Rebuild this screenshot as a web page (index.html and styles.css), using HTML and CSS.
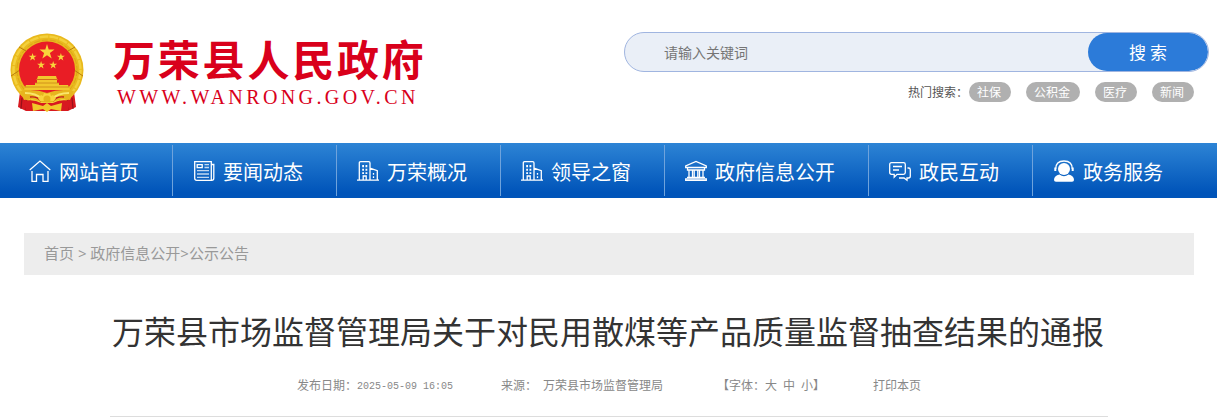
FILE: index.html
```html
<!DOCTYPE html>
<html lang="zh-CN">
<head>
    <meta charset="UTF-8">
    <title>万荣县市场监督管理局关于对民用散煤等产品质量监督抽查结果的通报</title>
    <link rel="stylesheet" href="styles.css">
</head>
<body>
    <header class="header">
        <a class="logo" href="#">
            <svg class="emblem" viewBox="0 0 74 79">
                <path d="M10 59L8 74L16 78H58L66 74L64 59Z" fill="#d81920"/>
                <path d="M12 65L11 76M17 66L16 77M57 66L58 77M62 65L63 76" stroke="#98101a" stroke-width="1.2"/>
                <circle cx="37" cy="37" r="36.5" fill="#e9b91d"/>
                <circle cx="37" cy="37" r="33.5" fill="none" stroke="#f3d03c" stroke-width="2.5" stroke-dasharray="9 1"/>
                <circle cx="37" cy="37" r="30" fill="none" stroke="#dba51a" stroke-width="1" stroke-dasharray="6 2"/>
                <path d="M1 43L10 37M73 43L64 37M9 14L16 18M65 14L58 18" stroke="#b97b0c" stroke-width="1"/>
                <circle cx="37" cy="36.5" r="28" fill="#e91d25"/>
                <g fill="#f8d53b">
                    <path id="star" d="M37 10L38.9 16.2H45.4L40.2 20L42.2 26.2L37 22.4L31.8 26.2L33.8 20L28.6 16.2H35.1Z" transform="translate(3.7 2) scale(.9)"/>
                    <path d="M37 10L38.9 16.2H45.4L40.2 20L42.2 26.2L37 22.4L31.8 26.2L33.8 20L28.6 16.2H35.1Z" transform="translate(5.2 15.2) scale(.47)"/>
                    <path d="M37 10L38.9 16.2H45.4L40.2 20L42.2 26.2L37 22.4L31.8 26.2L33.8 20L28.6 16.2H35.1Z" transform="translate(33.5 15.2) scale(.47)"/>
                    <path d="M37 10L38.9 16.2H45.4L40.2 20L42.2 26.2L37 22.4L31.8 26.2L33.8 20L28.6 16.2H35.1Z" transform="translate(13.7 23.2) scale(.47)"/>
                    <path d="M37 10L38.9 16.2H45.4L40.2 20L42.2 26.2L37 22.4L31.8 26.2L33.8 20L28.6 16.2H35.1Z" transform="translate(25.8 23.2) scale(.47)"/>
                </g>
                <path d="M28 43H46L47 46H27ZM27 47H47V50H27ZM25 50H49V54H25ZM16 52H58L60 57H14Z" fill="#f2c72d"/>
                <path d="M26 46.5H48M25 50H49M15 54H59" stroke="#c98516" stroke-width=".8"/>
                <path d="M10 58Q24 55 37 60Q50 55 64 58L60 67Q49 64 43 69H31Q25 64 14 67Z" fill="#e7b51e"/>
                <path d="M15 60Q26 60 32 66M59 60Q48 60 42 66" fill="none" stroke="#fae66b" stroke-width="2"/>
                <path d="M20 64Q27 63 31 68M54 64Q47 63 43 68" fill="none" stroke="#c41d1d" stroke-width="1.4"/>
                <path d="M28 65L31 62L33 63L34 60L37 61L40 60L41 63L43 62L46 65L44 68H30Z" fill="#f8d43c"/>
                <circle cx="37" cy="66" r="3.5" fill="#e6b21a"/>
                <path d="M14 68Q24 66 31 70H43Q50 66 60 68L58 78H16Z" fill="#d81920"/>
                <path d="M22 70L33 73L37 70L41 73L52 70L51 78L41 76L37 79L33 76L23 78Z" fill="#f1c829"/>
            </svg>
            <span class="logo-text">
                <strong class="logo-name">万荣县人民政府</strong>
                <span class="logo-url">WWW.WANRONG.GOV.CN</span>
            </span>
        </a>
        <div class="search">
            <form class="search-form">
                <input class="search-input" type="text" placeholder="请输入关键词">
                <button class="search-btn" type="button">搜 索</button>
            </form>
            <div class="hot">
                <span class="hot-label">热门搜索：</span>
                <a class="hot-tag" href="#">社保</a>
                <a class="hot-tag" href="#">公积金</a>
                <a class="hot-tag" href="#">医疗</a>
                <a class="hot-tag" href="#">新闻</a>
            </div>
        </div>
    </header>

    <nav class="nav">
        <a class="nav-item" href="#">
            <svg class="icon" viewBox="0 0 22 22"><path d="M.7 10L11 1L21.3 10M3 11V21.3H7.5V14.5H14V21.3H19V11"/></svg>
            网站首页
        </a>
        <a class="nav-item" href="#">
            <svg class="icon" viewBox="0 0 22 22"><path d="M1.7 1.7H18.3V20.3H3.7Q1.7 20.3 1.7 18.3ZM18.3 4.5H20.8V18.3Q20.8 20.3 18.8 20.3H17M4.2 4.6H9.2V7.6H4.2Z"/><path d="M11.5 4.7H16M11.5 7.5H16M4 10.7H16M4 14H16M4 17.3H16" opacity=".75"/></svg>
            要闻动态
        </a>
        <a class="nav-item" href="#">
            <svg class="icon" viewBox="0 0 22 22"><path d="M0 20.2H22M2.3 20V3Q2.3 1.7 3.6 1.7H11.7Q13 1.7 13 3V20M13 8.2L20.3 10.7V20M6.2 20V16H9.2V20M16.5 13V14.7M16.5 16.3V18"/><path d="M6.1 5V7.2M9.4 5V7.2M6.1 8.7V10.8M9.4 8.7V10.8M6.1 12.3V14M9.4 12.3V14" stroke-width="1.8"/></svg>
            万荣概况
        </a>
        <a class="nav-item" href="#">
            <svg class="icon" viewBox="0 0 22 22"><path d="M0 20.2H22M2.3 20V3Q2.3 1.7 3.6 1.7H11.7Q13 1.7 13 3V20M13 8.2L20.3 10.7V20M6.2 20V16H9.2V20M16.5 13V14.7M16.5 16.3V18"/><path d="M6.1 5V7.2M9.4 5V7.2M6.1 8.7V10.8M9.4 8.7V10.8M6.1 12.3V14M9.4 12.3V14" stroke-width="1.8"/></svg>
            领导之窗
        </a>
        <a class="nav-item" href="#">
            <svg class="icon" viewBox="0 0 22 22"><path d="M.7 7.5V6L11 1.5L21.3 6V7.5ZM2.5 7.5V10H19.5V7.5M4 10V17M7.5 10V17M9.2 10V17M12.8 10V17M14.5 10V17M18 10V17M2 17.3H20M.7 20.3V18.8H21.3V20.3Z"/></svg>
            政府信息公开
        </a>
        <a class="nav-item" href="#">
            <svg class="icon" viewBox="0 0 22 22"><path d="M2.5 2.7H14.5Q16.3 2.7 16.3 4.5V12.5Q16.3 14.3 14.5 14.3H8L5.2 17.2V14.3H2.5Q.7 14.3 .7 12.5V4.5Q.7 2.7 2.5 2.7ZM4 6.5H13M4 10H10M18.5 8H19.5Q21.3 8 21.3 9.8V16Q21.3 18 19.5 18H18V20.3L15 18H10"/></svg>
            政民互动
        </a>
        <a class="nav-item" href="#">
            <svg class="icon icon-solid" viewBox="0 0 22 22"><circle cx="11" cy="9" r="6"/><path d="M1 20Q1 15.5 6.5 14.5Q11 18 15.5 14.5Q21 15.5 21 20Q21 21.7 19 21.7H3Q1 21.7 1 20Z"/><path class="band" d="M2.7 9Q2.7 1 11 1T19.3 9"/><path d="M1.3 7.5H3.3V11H1.3ZM18.7 7.5H20.7V11H18.7Z"/></svg>
            政务服务
        </a>
    </nav>

    <main class="main">
        <div class="crumb">首页 &gt; 政府信息公开&gt;公示公告</div>
        <article class="article">
            <h1 class="title">万荣县市场监督管理局关于对民用散煤等产品质量监督抽查结果的通报</h1>
            <div class="meta">
                <span>发布日期：<span class="date">2025-05-09 16:05</span></span>
                <span class="source"><span>来源：</span><span>万荣县市场监督管理局</span></span>
                <span class="size">【字体：<a>大</a><a>中</a><a>小</a>】</span>
                <span>打印本页</span>
            </div>
        </article>
    </main>
</body>
</html>
```
FILE: styles.css
```css
* {
    margin: 0;
    padding: 0;
    box-sizing: border-box;
}

body {
    background: #fff;
    font-family: "Noto Sans CJK SC", sans-serif;
    color: #333;
    overflow: hidden;
}

a {
    color: inherit;
    text-decoration: none;
}

/* header */
.header {
    display: flex;
    justify-content: space-between;
    height: 143px;
    padding: 32px 8px 0 10px;
}

.logo {
    display: flex;
    gap: 30px;
    color: #d9001b;
}

.emblem {
    width: 74px;
    height: 79px;
    margin-top: 1px;
}

.logo-text {
    display: flex;
    flex-direction: column;
    white-space: nowrap;
}

.logo-name {
    height: 54px;
    margin-left: -1px;
    line-height: 52px;
    font-size: 42px;
    letter-spacing: 2.8px;
}

.logo-url {
    margin-left: 3px;
    font: 20px/22px "Liberation Serif", serif;
    letter-spacing: 3.4px;
}

.search {
    width: 585px;
}

.search-form {
    display: flex;
    height: 40px;
    border: 1px solid #a0b5e0;
    border-radius: 20px;
    background: #eaeff7;
    overflow: hidden;
}

.search-input {
    flex: 1;
    padding-left: 39px;
    border: 0;
    background: none;
    font-family: inherit;
    font-size: 14px;
}

.search-input::placeholder {
    color: #757575;
}

.search-btn {
    width: 120px;
    padding-bottom: 1px;
    border: 0;
    border-radius: 20px;
    background: #2c7bd9;
    color: #fff;
    font-family: inherit;
    font-size: 17px;
}

.hot {
    display: flex;
    justify-content: flex-end;
    gap: 15px;
    padding: 10px 15px 0 0;
    font-size: 12px;
    line-height: 20px;
}

.hot-label {
    margin-right: -14px;
    color: #555;
}

.hot-tag {
    padding: 0 10px 0 8px;
    border-radius: 10px;
    background: #b0b0b0;
    color: #fff;
}

/* nav */
.nav {
    display: flex;
    height: 55px;
    padding: 2px 0 2px 9px;
    background: linear-gradient(#2d84d5, #0054b9 90%);
}

.nav-item {
    display: flex;
    align-items: center;
    gap: 8px;
    padding: 1px 33px 0 20px;
    border-right: 1px solid #6fa3dc;
    color: #fff;
    font-size: 20px;
    white-space: nowrap;
}

.nav-item:last-child {
    border-right: 0;
}

.icon {
    width: 22px;
    height: 22px;
    fill: none;
    stroke: #fff;
    stroke-width: 1.3;
    margin-bottom: 1px;
}

.icon-solid {
    fill: #fff;
    stroke: none;
}

.icon-solid .band {
    fill: none;
    stroke: #fff;
}

/* article */
.main {
    width: 1170px;
    margin: 35px 0 0 24px;
}

.crumb {
    height: 42px;
    padding-left: 20px;
    background: #ededed;
    color: #999;
    font-family: "Open Sans", "Noto Sans CJK SC", sans-serif;
    font-size: 15px;
    line-height: 40px;
}

.article {
    width: 998px;
    height: 142px;
    margin-left: 86px;
    border-bottom: 1px solid #ddd;
}

.title {
    margin-left: -2px;
    padding-top: 31px;
    font-size: 32px;
    font-weight: normal;
    line-height: 48px;
    text-align: center;
    white-space: nowrap;
}

.meta {
    display: flex;
    justify-content: center;
    gap: 48px;
    padding-top: 21px;
    color: #888;
    font-size: 12px;
    line-height: 20px;
    white-space: nowrap;
}

.date {
    font-family: "Liberation Mono", monospace;
    font-size: 10px;
    vertical-align: 1px;
}

.source {
    display: flex;
    gap: 6px;
}

.size {
    margin-left: 6px;
}

.size a + a {
    margin-left: 6px;
}
```
